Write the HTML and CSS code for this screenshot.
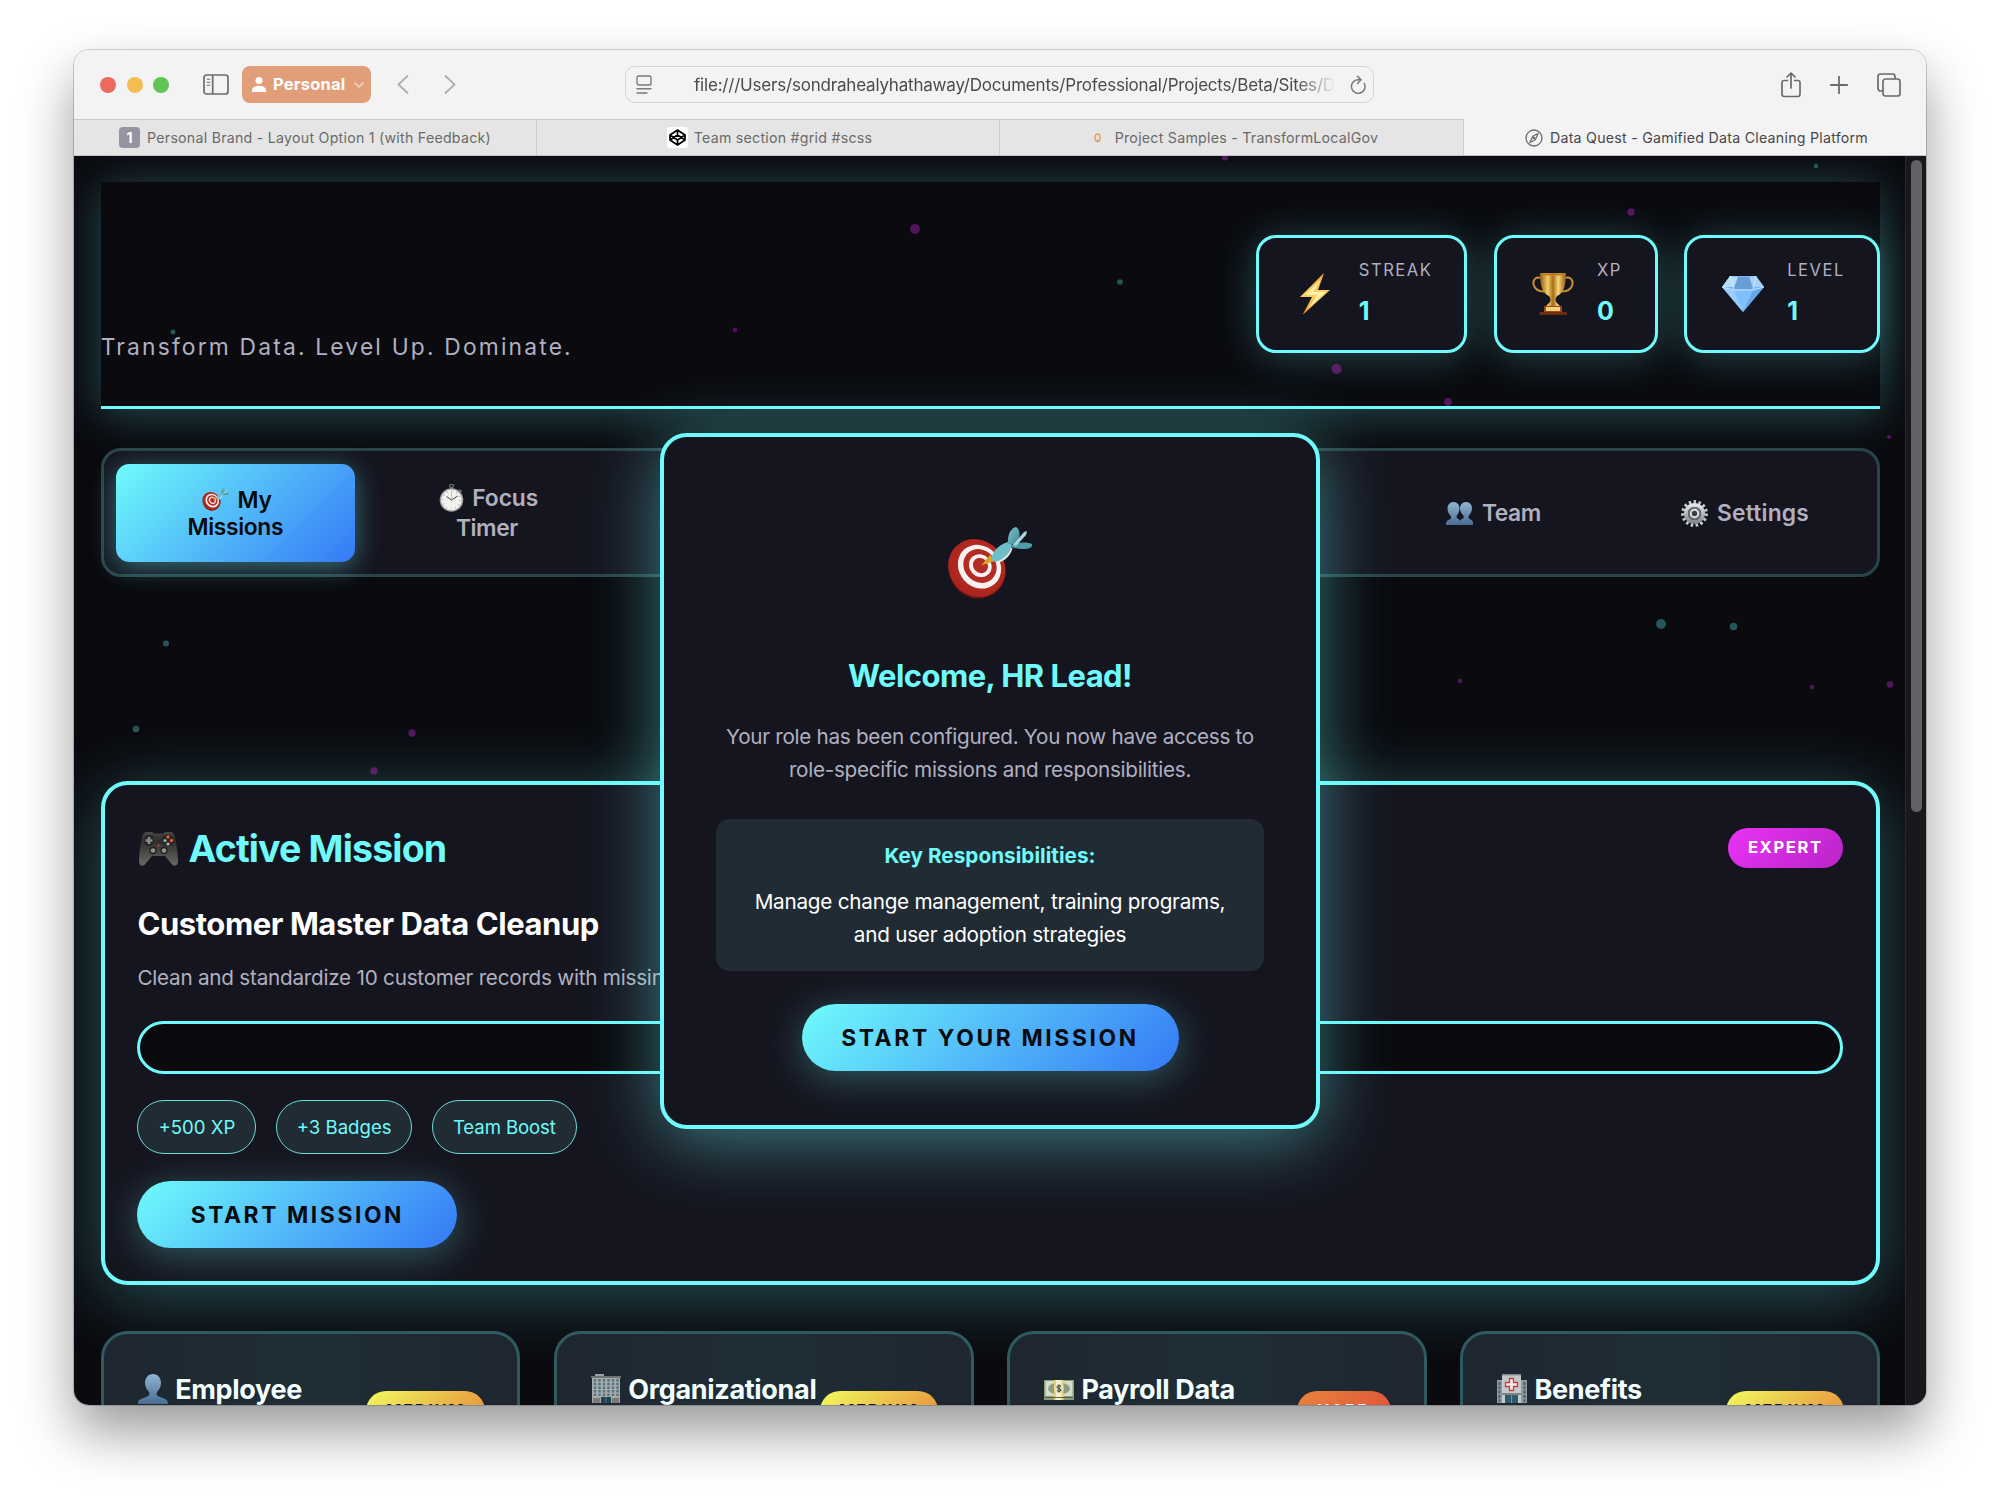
FILE: index.html
```html
<!DOCTYPE html>
<html lang="en">
<head>
<meta charset="utf-8">
<title>Data Quest - Gamified Data Cleaning Platform</title>
<link rel="stylesheet" href="styles.css">
</head>
<body>
<svg class="defs" width="0" height="0" aria-hidden="true">
  <defs>
    <linearGradient id="gBolt" x1="0" y1="0" x2="0" y2="1"><stop offset="0" stop-color="#f8a93a"/><stop offset=".5" stop-color="#fbd36b"/><stop offset="1" stop-color="#ee8f1f"/></linearGradient>
    <linearGradient id="gGold" x1="0" x2="1"><stop offset="0" stop-color="#8f5a12"/><stop offset=".3" stop-color="#f3cf6a"/><stop offset=".5" stop-color="#a86d17"/><stop offset=".7" stop-color="#f6d879"/><stop offset="1" stop-color="#8f5a12"/></linearGradient>
    <linearGradient id="gBust" x1="0" y1="0" x2="0" y2="1"><stop offset="0" stop-color="#8fb4d3"/><stop offset="1" stop-color="#496d92"/></linearGradient>
    <linearGradient id="gPad" x1="0" y1="0" x2="0" y2="1"><stop offset="0" stop-color="#4a4b48"/><stop offset=".25" stop-color="#2c2d2c"/><stop offset="1" stop-color="#6a6964"/></linearGradient>
    <linearGradient id="gGear" x1="0" y1="0" x2="0" y2="1"><stop offset="0" stop-color="#e3e6e8"/><stop offset="1" stop-color="#85898d"/></linearGradient>
    <linearGradient id="gFin" x1="0" y1="0" x2="1" y2="1"><stop offset="0" stop-color="#7cc6cf"/><stop offset="1" stop-color="#3f8792"/></linearGradient>
    <radialGradient id="gRed" cx=".5" cy=".4" r=".6"><stop offset="0" stop-color="#c6332a"/><stop offset="1" stop-color="#a8231c"/></radialGradient>
  </defs>
  <symbol id="target" viewBox="0 0 86 72">
    <ellipse cx="31" cy="44" rx="28" ry="27.500" transform="rotate(12 31 44)" fill="#6d130f"/>
    <ellipse cx="29.700" cy="41" rx="30" ry="27.500" fill="url(#gRed)" transform="rotate(48 29.700 41)"/>
    <ellipse cx="32.500" cy="39.700" rx="23" ry="20.500" fill="#f4f1f0" transform="rotate(48 32.500 39.700)"/>
    <ellipse cx="33" cy="39" rx="17.700" ry="15.800" fill="#b42b23" transform="rotate(48 33 39)"/>
    <ellipse cx="33.300" cy="38.700" rx="12" ry="10.800" fill="#f4f1f0" transform="rotate(48 33.300 38.700)"/>
    <ellipse cx="33.500" cy="38.500" rx="8" ry="7.200" fill="#b42b23" transform="rotate(48 33.500 38.500)"/>
    <path d="M34 38.500 43 28l6.500 5.500z" fill="#d9a521"/>
    <path d="M45 33c-1.500-7 6-15 16-18 4 1 4 3 3.500 5C61 28 55 35 47.500 34.500z" fill="#6fbfcb"/>
    <path d="M50 34.500c7-3 12-8 14-14l1.500 1c-2 7-7 12-13 13.700z" fill="#d6eaec"/>
    <path d="M61 17C60 8 64 1 69 0c4 2 5 9 1 17z" fill="url(#gFin)"/>
    <path d="M64 18c7-3 15-3 21-1 1 3-3 5-8 5-6 0-10-1-13-2z" fill="#4f9ba6"/>
    <path d="M66 18 77 5l3-1-1 4-10 11z" fill="#a9d5da"/>
  </symbol>
  <symbol id="bolt" viewBox="0 0 30 42"><path d="M24 0 0 24h12L2.500 42 30 17H18z" fill="url(#gBolt)"/><path d="M21 6 5.500 22H17l-9 14L25.500 19H13.500z" fill="#fff0a8"/></symbol>
  <symbol id="trophy" viewBox="0 0 42 42">
    <path d="M9 5C-1 2-1 16 8 18c3 1 5-1 3 1M33 5c10-3 10 11 1 13-3 1-5-1-3 1" fill="none" stroke="#c8912e" stroke-width="2"/>
    <path d="M8 0h26c0 12-2 20-9 23-2 3-2 5 0 7l3 3H14l3-3c2-2 2-4 0-7C10 20 8 12 8 0z" fill="url(#gGold)"/>
    <ellipse cx="21" cy="1.300" rx="13" ry="1.300" fill="#b67a1c"/>
    <path d="M12 33h18v6H12z" fill="#9a4a1d"/><path d="M14 34h14v4H14z" fill="#f3d27b"/><path d="M8 39h27v3H7z" fill="#6e2b10"/>
  </symbol>
  <symbol id="gem" viewBox="0 0 42 36">
    <path d="M8 0h26l8 11-21 25L0 11z" fill="#7bb8f1"/><path d="M8 0 0 11h12L16 1z" fill="#b7dcfa"/><path d="M34 0l8 11H31L27 1z" fill="#a6d2f8"/>
    <path d="M16 1h11l4 12H12z" fill="#6a9fd6"/><path d="M0 11l12 3 9 22z" fill="#9bcdf8"/><path d="M42 11l-11 3-10 22z" fill="#64a8ea"/><path d="M12 14h19L21 36z" fill="#7dc0fb"/><path d="M0 11l12 3h19l11-3M8 0l4 13M34 0l-3 13" stroke="#d6edff" stroke-width=".8" fill="none"/>
  </symbol>
  <symbol id="watch" viewBox="0 0 25 28">
    <circle cx="12.500" cy="2" r="1.800" fill="none" stroke="#777c80" stroke-width="1.200"/><path d="M11 3h3v3h-3z" fill="#6e7377"/><path d="M20 6l2.500 2" stroke="#60666b" stroke-width="2.500"/>
    <circle cx="12.500" cy="16" r="11.800" fill="#9a9da0"/><circle cx="12.500" cy="16" r="10.400" fill="#f3f2ef"/><circle cx="12.500" cy="16" r="8.600" fill="none" stroke="#9b9b9b" stroke-width="1.300" stroke-dasharray=".8 3.700"/>
    <path d="M7.500 12.500 12.500 16l6-4" fill="none" stroke="#444" stroke-width="1"/><path d="M12.500 16V8" stroke="#e09b8c" stroke-width=".7"/>
  </symbol>
  <symbol id="bust" viewBox="0 0 30 30"><path d="M15 0c5 0 8 4 8 9 0 4-2 7-4 9-1 3 0 4 3 5 5 2 8 2 8 7H0c0-5 3-5 8-7 3-1 4-2 3-5-2-2-4-5-4-9 0-5 3-9 8-9z" fill="url(#gBust)"/></symbol>
  <symbol id="people" viewBox="0 0 27 23">
    <path d="M7.500 0c4 0 6 3 6 6.500S12 12 11 13.500c-1 2 0 3 2 3.500v6H0c0-4 1-4.500 3.500-5.500 2-.8 2-2 .8-4C3 12 1.500 10 1.500 6.500S3.500 0 7.500 0z" fill="url(#gBust)"/>
    <path d="M20 0c4 0 6 3 6 6.500S24 12 23 13.500c-1 2-.5 3 1.500 4 2 .8 2.500 1.500 2.500 5.500H13v-4c1-1.500 3-1.500 4-2.500s1-2 0-3.500c-1.500-2-3-3-3-6.500S16 0 20 0z" fill="url(#gBust)"/>
  </symbol>
  <symbol id="gear" viewBox="0 0 27 27">
    <circle cx="13.500" cy="13.500" r="11.700" fill="none" stroke="#c9cdd0" stroke-width="3.400" stroke-dasharray="2.450 2.450"/>
    <circle cx="13.500" cy="13.500" r="8.600" fill="none" stroke="url(#gGear)" stroke-width="4"/><circle cx="13.500" cy="13.500" r="6.500" fill="#6f7376"/><circle cx="13.500" cy="13.500" r="3.700" fill="#3a3d42" stroke="#dcdfe1" stroke-width="2"/>
  </symbol>
  <symbol id="pad" viewBox="0 0 39 34">
    <path d="M8 0h5l2 1.500h9L26 0h5c3 0 4 2 5 5 1 5 3 16 3 24 0 6-5 6-8 1l-5-6H13l-5 6c-3 5-8 5-8-1C0 21 2 10 3 5c1-3 2-5 5-5z" fill="url(#gPad)"/>
    <circle cx="10" cy="8.500" r="6" fill="#242524" stroke="#5b4336" stroke-width=".6"/><path d="M8.700 5h2.600v2.200h2.200v2.600h-2.200V12H8.700V9.800H6.500V7.200h2.200z" fill="#8c8c8a"/>
    <circle cx="29" cy="8.500" r="6" fill="#242524"/><circle cx="29" cy="5" r="1.700" fill="#e2632e"/><circle cx="32.500" cy="8.500" r="1.700" fill="#e2632e"/><circle cx="26" cy="8.500" r="1.600" fill="#aaa"/><circle cx="29" cy="12" r="1.600" fill="#b5b5b5"/>
    <circle cx="14" cy="18.500" r="3.700" fill="#222"/><circle cx="14" cy="18.500" r="2.300" fill="#91918e"/><circle cx="25" cy="18.500" r="3.700" fill="#222"/><circle cx="25" cy="18.500" r="2.300" fill="#91918e"/><circle cx="19.500" cy="13.500" r="1" fill="#c6572c"/>
  </symbol>
  <symbol id="building" viewBox="0 0 30 30">
    <path d="M4 0h9v3H4z" fill="#9da09f"/><path d="M1 2.500h28V29H1z" fill="#a7aaa8"/><path d="M0 2h30v2H0z" fill="#6f7372"/>
    <path d="M4 5v17M8.500 5v17M13 5v17M17.500 5v17M22 5v17M26.500 5v17" stroke="#4e7486" stroke-width="2.400" stroke-dasharray="2.500 1.200"/><path d="M10 23h10v6H10z" fill="#1d4354"/><path d="M2 24h7v5H2zM21 24h7v5h-7z" fill="#777b78"/><path d="M15 23v6" stroke="#88a" stroke-width=".6"/>
  </symbol>
  <symbol id="cash" viewBox="0 0 30 20">
    <path d="M0 0h30v20H0z" fill="#8a9a83"/><path d="M1.500 1h27v15h-27z" fill="#d5dcc7"/><ellipse cx="15" cy="8.500" rx="11" ry="6" fill="#8b9c83"/><path d="M10 0h9.500v20H10z" fill="#e8d173"/><path d="M12 0h5.500v20H12z" fill="#f6efcb"/><circle cx="15" cy="8.500" r="4.600" fill="#e3dfc4"/><path d="M17 6.500c-1-1.500-4-1-4 .5 0 2 4 1 4 3 0 1.700-3 2-4 .3M15 4.500v8" stroke="#333a2c" stroke-width="1" fill="none"/><path d="M1 17.500h28" stroke="#59644f" stroke-width="1"/>
  </symbol>
  <symbol id="hospital" viewBox="0 0 30 30">
    <path d="M0 6h30v23H0z" fill="#939a9c"/><path d="M5 0h19v29H5z" fill="#c3c8c8"/><path d="M5 0h19v1.500H5z" fill="#858b8c"/><path d="M2.500 8v20M27.500 8v20" stroke="#42647a" stroke-width="2.200" stroke-dasharray="3 1.300"/><path d="M12.500 4.500h4v4h4v4h-4v4h-4v-4h-4v-4h4z" fill="#eee" stroke="#d33a38" stroke-width="1.300"/><path d="M8 21h13v8H8z" fill="#315a70"/><path d="M14.500 21v8" stroke="#89a" stroke-width=".8"/><path d="M5 19h19v2H5z" fill="#7d8485"/>
  </symbol>
</svg>

<div class="desktop">
<div class="window">
  <header class="toolbar">
    <div class="lights"><span class="light red"></span><span class="light yellow"></span><span class="light green"></span></div>
    <svg class="ic-sidebar" viewBox="0 0 26 21" fill="none" stroke="#6b6b6b" stroke-width="1.700"><rect x="1" y="1" width="24" height="19" rx="2.500"/><path d="M9.700 1v19"/><path d="M3.800 5.200h3.400M3.800 8.200h3.400M3.800 11.200h3.400" stroke-width="1.100"/></svg>
    <div class="profile">
      <svg class="ic-person" viewBox="0 0 14 15" fill="#fff"><circle cx="7" cy="3.600" r="3.500"/><path d="M0 15v-1.500C0 10.500 3 8.700 7 8.700s7 1.800 7 4.800V15z"/></svg>
      <span class="profile-name">Personal</span>
      <svg class="ic-down" viewBox="0 0 10 6" fill="none" stroke="#f3d3c2" stroke-width="1.700" stroke-linecap="round"><path d="M1 1l4 4 4-4"/></svg>
    </div>
    <svg class="ic-back" viewBox="0 0 12 19" fill="none" stroke="#adadad" stroke-width="1.800" stroke-linecap="round"><path d="M10.500 1 1.500 9.500l9 8.500"/></svg>
    <svg class="ic-fwd" viewBox="0 0 12 19" fill="none" stroke="#adadad" stroke-width="1.800" stroke-linecap="round"><path d="M1.500 1l9 8.500-9 8.500"/></svg>
    <div class="urlbar">
      <svg class="ic-reader" viewBox="0 0 16 19" fill="none" stroke="#7a7a7a" stroke-width="1.400" stroke-linecap="round"><rect x="1" y="1" width="14" height="9" rx="1.800"/><path d="M1 13.700h14M1 18h10"/></svg>
      <span class="url">file:///Users/sondrahealyhathaway/Documents/Professional/Projects/Beta/Sites/D</span>
      <svg class="ic-reload" viewBox="0 0 16 19" fill="none" stroke="#777" stroke-width="1.500" stroke-linecap="round" stroke-linejoin="round"><path d="M14.300 8.500A6.800 6.800 0 1 1 8 4.800h2.500"/><path d="M7.500 1.200l3.500 3.600-3.500 3.600"/></svg>
    </div>
    <div class="actions">
      <svg class="ic-share" viewBox="0 0 20 26" fill="none" stroke="#6b6b6b" stroke-width="1.700" stroke-linecap="round" stroke-linejoin="round"><path d="M6.500 8.500H3.200C1.900 8.500 1 9.400 1 10.700v11.600c0 1.300.9 2.200 2.200 2.200h13.600c1.300 0 2.200-.9 2.200-2.200V10.700c0-1.300-.9-2.200-2.200-2.200h-3.300M10 16V1.200M6 5l4-4 4 4"/></svg>
      <svg class="ic-plus" viewBox="0 0 18 18" stroke="#6b6b6b" stroke-width="1.800" stroke-linecap="round"><path d="M9 .8v16.400M.8 9h16.400"/></svg>
      <svg class="ic-tabs" viewBox="0 0 24 24" fill="none" stroke="#6b6b6b" stroke-width="1.700"><path d="M6 18H3.500C2 18 1 17 1 15.500v-12C1 2 2 1 3.500 1h12C17 1 18 2 18 3.500V6"/><rect x="6" y="6" width="17" height="17" rx="2.500"/></svg>
    </div>
  </header>
  <div class="tabs">
    <div class="tab"><span class="fav-one">1</span><span>Personal Brand - Layout Option 1 (with Feedback)</span></div>
    <div class="tab tab-team"><svg class="fav-pen" viewBox="0 0 21 21"><rect width="21" height="21" rx="3" fill="#fff"/><path d="M10.500 3l7.500 5v5l-7.500 5L3 13V8zM3 8l7.500 5L18 8M3 13l7.500-5 7.500 5M10.500 3v5M10.500 13v5" fill="none" stroke="#000" stroke-width="1.700" stroke-linejoin="round"/></svg><span>Team section #grid #scss</span></div>
    <div class="tab tab-samples"><svg class="fav-drop" viewBox="0 0 7 10"><ellipse cx="3.500" cy="4.700" rx="2.500" ry="3.900" fill="none" stroke="#f0953f" stroke-width="1.300"/><path d="M3.500 6v3" stroke="#f0953f" stroke-width="1"/></svg><span>Project Samples - TransformLocalGov</span></div>
    <div class="tab active"><svg class="fav-compass" viewBox="0 0 18 18"><circle cx="9" cy="9" r="8" fill="none" stroke="#6b6b6b" stroke-width="1.300"/><path d="M13 4.500l-2.500 6L5 13.500l2.500-6z" fill="none" stroke="#6b6b6b" stroke-width="1.200"/><circle cx="9" cy="9" r="1.300" fill="#6b6b6b"/></svg><span>Data Quest - Gamified Data Cleaning Platform</span></div>
  </div>
  <div class="page">
    <main class="view">
      <section class="hero">
        <p class="tagline">Transform Data. Level Up. Dominate.</p>
        <div class="stats">
          <div class="stat streak"><span class="stat-icon"><svg width="30" height="42"><use href="#bolt"/></svg></span><div class="stat-text"><span class="stat-label">STREAK</span><span class="stat-value">1</span></div></div>
          <div class="stat xp"><span class="stat-icon"><svg width="42" height="42"><use href="#trophy"/></svg></span><div class="stat-text"><span class="stat-label">XP</span><span class="stat-value">0</span></div></div>
          <div class="stat level"><span class="stat-icon"><svg width="42" height="36"><use href="#gem"/></svg></span><div class="stat-text"><span class="stat-label">LEVEL</span><span class="stat-value">1</span></div></div>
        </div>
      </section>
      <nav class="menu">
        <div class="item on"><span class="row lead"><svg width="27" height="23"><use href="#target"/></svg><span>My</span></span><span class="row">Missions</span></div>
        <div class="item"><span class="row lead"><svg class="ic-watch" width="25" height="28"><use href="#watch"/></svg><span>Focus</span></span><span class="row tight">Timer</span></div>
        <div class="item"></div><div class="item"></div><div class="item"></div>
        <div class="item"><span class="row tight"><svg width="27" height="23"><use href="#people"/></svg><span>Team</span></span></div>
        <div class="item"><span class="row loose"><svg width="27" height="27"><use href="#gear"/></svg><span>Settings</span></span></div>
      </nav>
      <section class="mission">
        <div class="mission-head"><h2><svg width="39" height="34"><use href="#pad"/></svg><span>Active Mission</span></h2><span class="badge expert">EXPERT</span></div>
        <h3>Customer Master Data Cleanup</h3>
        <p class="desc">Clean and standardize 10 customer records with missing</p>
        <div class="bar"></div>
        <div class="chips"><span class="chip chip-xp">+500 XP</span><span class="chip chip-badges">+3 Badges</span><span class="chip chip-boost">Team Boost</span></div>
        <div class="cta start">START MISSION</div>
      </section>
      <section class="cards">
        <article class="card"><h4><svg width="30" height="30"><use href="#bust"/></svg><span>Employee</span></h4><span class="badge medium">MEDIUM</span></article>
        <article class="card"><h4><svg width="30" height="30"><use href="#building"/></svg><span>Organizational</span></h4><span class="badge medium">MEDIUM</span></article>
        <article class="card"><h4><svg class="ic-cash" width="30" height="20"><use href="#cash"/></svg><span>Payroll Data</span></h4><span class="badge hard">HARD</span></article>
        <article class="card"><h4><svg width="30" height="30"><use href="#hospital"/></svg><span>Benefits</span></h4><span class="badge medium">MEDIUM</span></article>
      </section>
      <svg class="particles" viewBox="74 156 1831 1249">
        <g fill="#e52ff5" opacity=".33"><circle cx="915" cy="229" r="5"/><circle cx="735" cy="330" r="2.300"/><circle cx="1336.500" cy="369" r="5"/><circle cx="1448" cy="402" r="4"/><circle cx="1631" cy="212" r="3.700"/><circle cx="1225" cy="157.500" r="3"/><circle cx="412" cy="733" r="3.700"/><circle cx="374" cy="771" r="3.700"/><circle cx="1460" cy="681" r="2.300"/><circle cx="1812" cy="687" r="2.300"/><circle cx="1890" cy="684.500" r="3.200"/><circle cx="1889" cy="437" r="2"/></g>
        <g fill="#6ffbfb" opacity=".31"><circle cx="1120" cy="282" r="2.800"/><circle cx="1816" cy="166" r="2.200"/><circle cx="173" cy="332" r="2.500"/><circle cx="166" cy="643.500" r="3"/><circle cx="136" cy="729" r="3.300"/><circle cx="1661" cy="624" r="5"/><circle cx="1733.500" cy="626.500" r="3.800"/></g>
      </svg>
      <div class="modal">
        <svg class="modal-icon" width="86" height="72"><use href="#target"/></svg>
        <h2 class="modal-title">Welcome, HR Lead!</h2>
        <p class="modal-copy">Your role has been configured. You now have access to<br>role-specific missions and responsibilities.</p>
        <div class="duties">
          <strong>Key Responsibilities:</strong>
          <p>Manage change management, training programs,<br>and user adoption strategies</p>
        </div>
        <div class="cta go">START YOUR MISSION</div>
      </div>
    </main>
    <div class="scrollbar"><div class="thumb"></div></div>
  </div>
</div>
</div>
</body>
</html>
```
FILE: styles.css
```css
* { box-sizing: border-box; }
body { margin: 0; background: #fff; font-family: Inter, "Liberation Sans", sans-serif; }
h2, h3, h4, p { margin: 0; }
svg { display: block; flex: none; }
.defs { position: absolute; }

.desktop { width: 2000px; height: 1503px; padding: 50px 74px 0; overflow: hidden; }
.window { width: 1852px; height: 1355px; display: flex; flex-direction: column; border-radius: 15px; overflow: hidden; box-shadow: 0 0 0 1px rgba(0,0,0,.17), 0 27px 54px rgba(0,0,0,.4); }

/* browser chrome */
.toolbar { height: 69px; flex: none; display: flex; align-items: center; background: #f3f3f3; padding: 0 25px 0 26px; }
.lights { display: flex; gap: 10.5px; }
.light { width: 16px; height: 16px; border-radius: 50%; }
.red { background: #ec695e; }
.yellow { background: #f4bd4f; }
.green { background: #61c455; }
.ic-sidebar { width: 26px; height: 21px; margin-left: 34px; }
.profile { width: 129px; height: 37px; margin-left: 13px; border-radius: 8px; background: #e29d79; display: flex; align-items: center; padding-left: 10px; }
.ic-person { width: 14px; height: 15px; }
.profile-name { margin-left: 7px; margin-top: -2px; color: #fff; font-size: 16.5px; font-weight: 700; width: 73px; white-space: nowrap; letter-spacing: .2px; }
.ic-down { width: 10px; height: 6px; margin-left: 8px; }
.ic-back { width: 12px; height: 19px; margin-left: 26px; }
.ic-fwd { width: 12px; height: 19px; margin-left: 35px; }
.urlbar { width: 749px; height: 37px; margin-left: 169px; border: 1px solid #d4d4d4; border-radius: 10px; display: flex; align-items: center; }
.ic-reader { width: 16px; height: 19px; margin-left: 10px; }
.url { width: 641px; margin-left: 42px; font-size: 17px; color: #4b4b4b; white-space: nowrap; overflow: hidden; letter-spacing: -.2px; mask-image: linear-gradient(90deg, #000 94%, transparent 100%); }
.ic-reload { width: 16px; height: 19px; margin-left: 15px; }
.actions { flex: 1; display: flex; justify-content: flex-end; align-items: center; gap: 29px; }
.ic-share { width: 20px; height: 26px; }
.ic-plus { width: 18px; height: 18px; }
.ic-tabs { width: 24px; height: 24px; }

.tabs { height: 37px; flex: none; display: grid; grid-template-columns: 463px 463px 464px 1fr; border-bottom: 1px solid #c4c4c4; background: #f3f3f3; }
.tab { display: flex; align-items: center; justify-content: center; background: #e5e5e5; border-top: 1px solid #cbcbcb; border-right: 1px solid #cbcbcb; color: #6a6a6a; font-size: 14.2px; letter-spacing: .25px; white-space: nowrap; }
.tab.active { background: #f3f3f3; border-color: transparent; color: #474747; padding-left: 4px; }
.tab-team { padding-left: 3px; }
.tab-samples { padding-left: 9px; }
.fav-one { width: 21px; height: 21px; border-radius: 4px; background: #9595a2; color: #fff; font-weight: 700; font-size: 14px; line-height: 21px; text-align: center; margin-right: 7px; }
.fav-pen { width: 21px; height: 21px; margin-right: 6px; }
.fav-drop { width: 7px; height: 10px; margin-right: 14px; }
.fav-compass { width: 18px; height: 18px; margin-right: 7px; }

/* page */
.page { flex: 1; min-height: 0; display: flex; background: #0a0a0f; }
.view { position: relative; width: 1831px; padding: 26px 25.3px 0 26.7px; overflow: hidden; }
.scrollbar { flex: 1; background: #19191d; border-left: 1px solid #29292d; padding: 4px 4px 0 5px; }
.thumb { height: 652px; border-radius: 6px; background: #626264; }
.particles { position: absolute; left: 0; top: 0; width: 1831px; height: 1249px; }

.hero { height: 226.5px; background: #0a0a0f; border-bottom: 3px solid #6ffbfb; box-shadow: 0 5px 42px rgba(111,251,251,.28); display: flex; justify-content: space-between; align-items: center; }
.tagline { align-self: flex-end; margin-bottom: 39.5px; font-size: 22.8px; line-height: 38px; letter-spacing: 2.18px; color: #b0b0c0; white-space: nowrap; }
.stats { display: flex; gap: 26.7px; }
.stat { height: 118px; border: 3px solid #6ffbfb; border-radius: 20px; background: #15151f; box-shadow: 0 4px 42px rgba(111,251,251,.26); display: flex; align-items: center; gap: 20px; padding-left: 32.3px; }
.streak { width: 211.5px; }
.xp { width: 164px; }
.level { width: 195.3px; padding-left: 31.8px; }
.stat-icon { width: 48px; display: flex; justify-content: center; }
.stat-text { display: flex; flex-direction: column; gap: 6px; padding-top: 2px; }
.stat-label { font-size: 16.6px; line-height: 27px; letter-spacing: 1.5px; color: #b0b0c0; }
.stat-value { font-size: 25px; line-height: 42px; font-weight: 700; color: #6ffbfb; }

.menu { margin-top: 39.5px; height: 129px; padding: 12.5px; border: 3px solid #284449; border-radius: 20px; background: #15151f; display: grid; grid-template-columns: repeat(7, 1fr); gap: 13.3px; }
.item { display: flex; flex-direction: column; align-items: center; justify-content: center; padding-top: 1.5px; border-radius: 13.3px; color: #b0b0c0; font-weight: 600; font-size: 22.8px; line-height: 30.5px; letter-spacing: -.1px; }
.item.on { color: #0a0a0f; line-height: 27.3px; letter-spacing: -.34px; background: linear-gradient(135deg, #6ffbfb, #3579f6); box-shadow: 0 5px 27px rgba(111,251,251,.4); }
.row { display: flex; align-items: center; gap: 9px; }
.row.lead { padding-left: 3px; gap: 8.5px; }
.row.tight { letter-spacing: -.4px; }
.row.loose { letter-spacing: .2px; }

.mission { margin-top: 203.5px; height: 504.5px; padding: 33.5px 32.7px; border: 4px solid #6ffbfb; border-radius: 26.7px; background: #15151f; box-shadow: 0 11px 70px rgba(111,251,251,.3); }
.mission-head { height: 62px; display: flex; justify-content: space-between; align-items: center; }
.mission h2 { display: flex; align-items: center; gap: 10.5px; padding-left: 1.5px; font-size: 37.5px; line-height: 62px; letter-spacing: -.84px; color: #6ffbfb; }
.mission h3 { margin-top: 18px; font-size: 31px; line-height: 51px; letter-spacing: -.43px; color: #fff; white-space: nowrap; }
.desc { margin-top: 12px; font-size: 20.7px; line-height: 34px; letter-spacing: -.24px; color: #b0b0c0; white-space: nowrap; }
.bar { margin-top: 26px; height: 52.5px; border: 3px solid #6ffbfb; border-radius: 27px; background: #0a0a0f; }
.chips { margin-top: 26.5px; display: flex; gap: 20px; }
.chip { height: 54px; border: 1.5px solid #6adcde; border-radius: 27px; background: #202b34; color: #6ffbfb; font-size: 18.6px; line-height: 52px; text-align: center; }
.chip-xp { width: 119px; }
.chip-badges { width: 135.5px; }
.chip-boost { width: 145px; letter-spacing: -.1px; }
.cta { display: flex; align-items: center; justify-content: center; height: 67.5px; padding-top: 1px; border-radius: 34px; background: linear-gradient(135deg, #6ffbfb, #3579f6); box-shadow: 0 7px 38px rgba(111,251,251,.3); color: #0a0a0f; font-size: 22.8px; font-weight: 700; letter-spacing: 2.6px; white-space: nowrap; }
.start { margin-top: 26.5px; width: 320px; }

.badge { height: 40px; border-radius: 20px; font-size: 16.6px; font-weight: 700; line-height: 39px; letter-spacing: 1.6px; text-align: center; white-space: nowrap; flex: none; }
.expert { width: 115.5px; margin-top: -2px; background: linear-gradient(135deg, #ea33f7, #b924c6); color: #fff; }
.medium { width: 118.5px; background: linear-gradient(135deg, #f2fb5d, #e5873a); color: #15151f; }
.hard { width: 94px; background: linear-gradient(135deg, #e8853c, #df4b38); color: #fff; }

.cards { margin-top: 46px; display: grid; grid-template-columns: repeat(4, 1fr); gap: 33.4px; }
.card { height: 260px; padding: 33.5px 32.5px 0 34.5px; border: 3px solid #2f5a61; border-radius: 26.7px; background: linear-gradient(90deg, #1e2630, #1f2e36 50%, #1e2630); display: flex; align-items: flex-start; justify-content: space-between; }
.card h4 { height: 88px; display: flex; align-items: flex-start; gap: 7px; font-size: 27px; line-height: 44px; letter-spacing: -.33px; color: #f4ffff; }
.card h4 svg { margin-top: 6px; }
.card h4 .ic-cash { margin-top: 12px; }
.card .badge { margin-top: 23px; margin-left: -10px; }

/* dialog over the page */
.modal { position: absolute; left: 586px; top: 276.5px; width: 660px; height: 696px; border: 4px solid #6ffbfb; border-radius: 26.7px; background: #15151f; box-shadow: 0 11px 70px rgba(111,251,251,.45); padding: 90px 52.5px 0; display: flex; flex-direction: column; align-items: center; text-align: center; white-space: nowrap; }
.modal-title { margin-top: 51.5px; font-size: 31px; line-height: 51px; letter-spacing: -.55px; color: #6ffbfb; }
.modal-copy { margin-top: 19px; font-size: 20.7px; line-height: 33.3px; letter-spacing: -.29px; color: #b0b0c0; }
.duties { margin-top: 32px; width: 547.5px; height: 152px; border-radius: 13.3px; background: #202b34; padding-top: 20px; font-size: 20.7px; line-height: 33.3px; letter-spacing: -.24px; color: #fff; }
.duties strong { display: block; letter-spacing: .04px; color: #6ffbfb; }
.duties p { margin-top: 13px; }
.go { margin-top: 33px; width: 377px; flex: none; letter-spacing: 2.65px; }
```
